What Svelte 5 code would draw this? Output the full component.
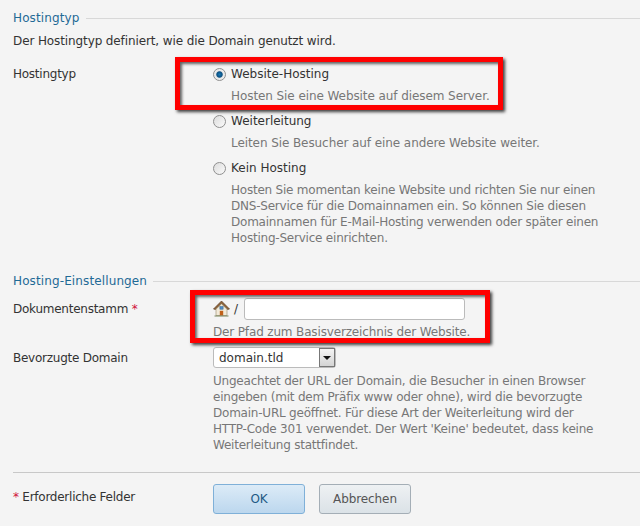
<script>
	const types = [
		{ label: 'Website-Hosting', checked: true, loose: true, lines: ['Hosten Sie eine Website auf diesem Server.'] },
		{ label: 'Weiterleitung', checked: false, loose: true, lines: ['Leiten Sie Besucher auf eine andere Website weiter.'] },
		{
			label: 'Kein Hosting',
			checked: false,
			loose: false,
			lines: [
				'Hosten Sie momentan keine Website und richten Sie nur einen',
				'DNS-Service für die Domainnamen ein. So können Sie diesen',
				'Domainnamen für E-Mail-Hosting verwenden oder später einen',
				'Hosting-Service einrichten.'
			]
		}
	];

	const domainHint = [
		'Ungeachtet der URL der Domain, die Besucher in einen Browser',
		'eingeben (mit dem Präfix www oder ohne), wird die bevorzugte',
		'Domain-URL geöffnet. Für diese Art der Weiterleitung wird der',
		'HTTP-Code 301 verwendet. Der Wert \'Keine\' bedeutet, dass keine',
		'Weiterleitung stattfindet.'
	];
</script>

<div class="page">
	<section class="group first">
		<h2 class="legend"><span>Hostingtyp</span></h2>
		<p class="intro">Der Hostingtyp definiert, wie die Domain genutzt wird.</p>
		<div class="row">
			<div class="label">Hostingtyp</div>
			<div class="field radios">
				{#each types as t}
					<div class="radio-item">
						<div class="radio-line">
							<span class="radio" class:checked={t.checked}></span>
							<span class="radio-label">{t.label}</span>
						</div>
						<div class="hint" class:loose={t.loose}>
							{#each t.lines as line}<div>{line}</div>{/each}
						</div>
					</div>
				{/each}
			</div>
		</div>
	</section>

	<section class="group second">
		<h2 class="legend"><span>Hosting-Einstellungen</span></h2>
		<div class="row docroot">
			<div class="label">Dokumentenstamm <span class="req">*</span></div>
			<div class="field">
				<div class="path-line">
					<svg class="home" width="17" height="17" viewBox="0 0 17 17">
						<path d="M0.5 9 L8.5 1 L16.5 9 L14.5 9.5 L8.5 3.8 L2.5 9.5 Z" fill="#8c6239" stroke="#5f3f22" stroke-width="0.7"/>
						<path d="M3 9.2 L8.5 4 L14 9.2 V15.5 H3 Z" fill="#f1ead9" stroke="#a39678" stroke-width="0.7"/>
						<rect x="6.8" y="10.8" width="3.4" height="4.7" fill="#c0611a"/>
						<rect x="6.9" y="6.6" width="3.2" height="2.6" fill="#4f8cc4" stroke="#2f5f8f" stroke-width="0.5"/>
						<path d="M1.5 16 H15.5" stroke="#77835a" stroke-width="1"/>
					</svg>
					<span class="slash">/</span>
					<input class="text" type="text" />
				</div>
				<div class="hint">Der Pfad zum Basisverzeichnis der Website.</div>
			</div>
		</div>
		<div class="row domain">
			<div class="label">Bevorzugte Domain</div>
			<div class="field">
				<div class="select">
					<span class="select-value">domain.tld</span>
					<span class="select-btn"><i></i></span>
				</div>
				<div class="hint">
					{#each domainHint as line}<div>{line}</div>{/each}
				</div>
			</div>
		</div>
	</section>

	<footer class="actions">
		<div class="label"><span class="req">*</span> Erforderliche Felder</div>
		<div class="buttons">
			<button class="btn primary">OK</button>
			<button class="btn">Abbrechen</button>
		</div>
	</footer>

	<!-- screenshot annotations -->
	<div class="mark mark-type"></div>
	<div class="mark mark-root"></div>
</div>

<style>
	:global(body) {
		margin: 0;
		background: #f4f4f4;
	}

	.page {
		position: relative;
		width: 640px;
		height: 526px;
		overflow: hidden;
		box-sizing: border-box;
		padding: 0 0 0 13px;
		background: #f4f4f4;
		color: #333;
		font-family: "DejaVu Sans", sans-serif;
		font-size: 12px;
		line-height: 16px;
	}

	.legend {
		display: flex;
		align-items: center;
		gap: 6px;
		margin: 0;
		font-size: 12px;
		font-weight: normal;
		line-height: 16px;
		letter-spacing: 0.12px;
		color: #1f6a96;
	}

	.legend::after {
		content: '';
		flex: 1;
		border-top: 1px solid #d8d8d8;
	}

	.group.first {
		padding-top: 10px;
	}

	.group.second {
		padding-top: 18px;
	}

	.intro {
		margin: 7px 0 0;
		letter-spacing: -0.11px;
	}

	.row {
		display: flex;
	}

	.first .row {
		margin-top: 17px;
	}

	.label {
		width: 200px;
		flex-shrink: 0;
		letter-spacing: -0.25px;
	}

	.field {
		flex: 1;
	}

	.req {
		color: #d0103a;
	}

	.radio-item {
		margin-bottom: 9px;
	}

	.radio-line {
		display: flex;
		align-items: center;
		gap: 5px;
	}

	.radio {
		box-sizing: border-box;
		width: 13px;
		height: 13px;
		border-radius: 50%;
		border: 1px solid #8f8f8f;
		background: linear-gradient(135deg, #dcdcdc, #fafafa);
	}

	.radio.checked {
		background: radial-gradient(circle, #1a7ab8 0, #0b4f80 35%, #e8e8e8 48%, #f4f4f4 100%);
	}

	.hint {
		margin-top: 6px;
		margin-left: 18px;
		color: #777;
		letter-spacing: -0.22px;
	}

	.hint.loose {
		letter-spacing: -0.08px;
	}

	.second .hint {
		margin-left: 0;
	}

	.docroot {
		margin-top: 8px;
	}

	.docroot .label {
		padding-top: 4px;
	}

	.path-line {
		display: flex;
		align-items: center;
		gap: 3px;
		height: 23px;
	}

	.slash {
		color: #333;
		margin: 0 3px 0 1px;
	}

	.text {
		box-sizing: border-box;
		width: 221px;
		height: 22px;
		padding: 0 4px;
		border: 1px solid #bbb;
		border-radius: 3px;
		background: #fff;
	}

	.docroot .hint {
		margin-top: 4px;
		letter-spacing: -0.15px;
	}

	.domain {
		margin-top: 7px;
	}

	.domain .label {
		padding-top: 3px;
	}

	.select {
		box-sizing: border-box;
		display: flex;
		align-items: center;
		justify-content: space-between;
		width: 123px;
		height: 21px;
		padding-left: 5px;
		border: 1px solid #bbb;
		border-radius: 3px;
		background: #fff;
		color: #333;
	}

	.select-btn {
		box-sizing: border-box;
		display: flex;
		align-items: center;
		justify-content: center;
		width: 16px;
		height: 19px;
		border: 1px solid #777;
		background: linear-gradient(#f4f4f4, #d4d4d4);
	}

	.select-btn i {
		width: 0;
		height: 0;
		border-left: 4px solid transparent;
		border-right: 4px solid transparent;
		border-top: 4px solid #111;
	}

	.domain .hint {
		margin-top: 5px;
	}

	.actions {
		display: flex;
		align-items: flex-start;
		margin-top: 19px;
		padding-top: 15px;
		border-top: 1px solid #c8c8c8;
	}

	.actions .label {
		padding-top: 1px;
		line-height: 16px;
	}

	.buttons {
		display: flex;
		gap: 14px;
		margin-top: -4px;
	}

	.btn {
		box-sizing: border-box;
		width: 92px;
		height: 30px;
		padding: 0;
		border: 1px solid #a4aeb6;
		border-radius: 3px;
		background: linear-gradient(#eef1f3, #dbe2e7);
		color: #555;
		font-family: inherit;
		font-size: 12px;
		letter-spacing: -0.1px;
	}

	.btn.primary {
		border-color: #7fb0d8;
		background: linear-gradient(#dcebf7, #bcd7ee);
		color: #1f5a85;
	}

	.mark {
		position: absolute;
		box-sizing: border-box;
		border: 5px solid #f00;
		box-shadow: 2px 2px 3px rgba(0, 0, 0, 0.75), inset 2px 2px 3px rgba(0, 0, 0, 0.6);
	}

	.mark-type {
		left: 175px;
		top: 57px;
		width: 328px;
		height: 53px;
	}

	.mark-root {
		left: 190px;
		top: 290px;
		width: 300px;
		height: 53px;
	}
</style>
